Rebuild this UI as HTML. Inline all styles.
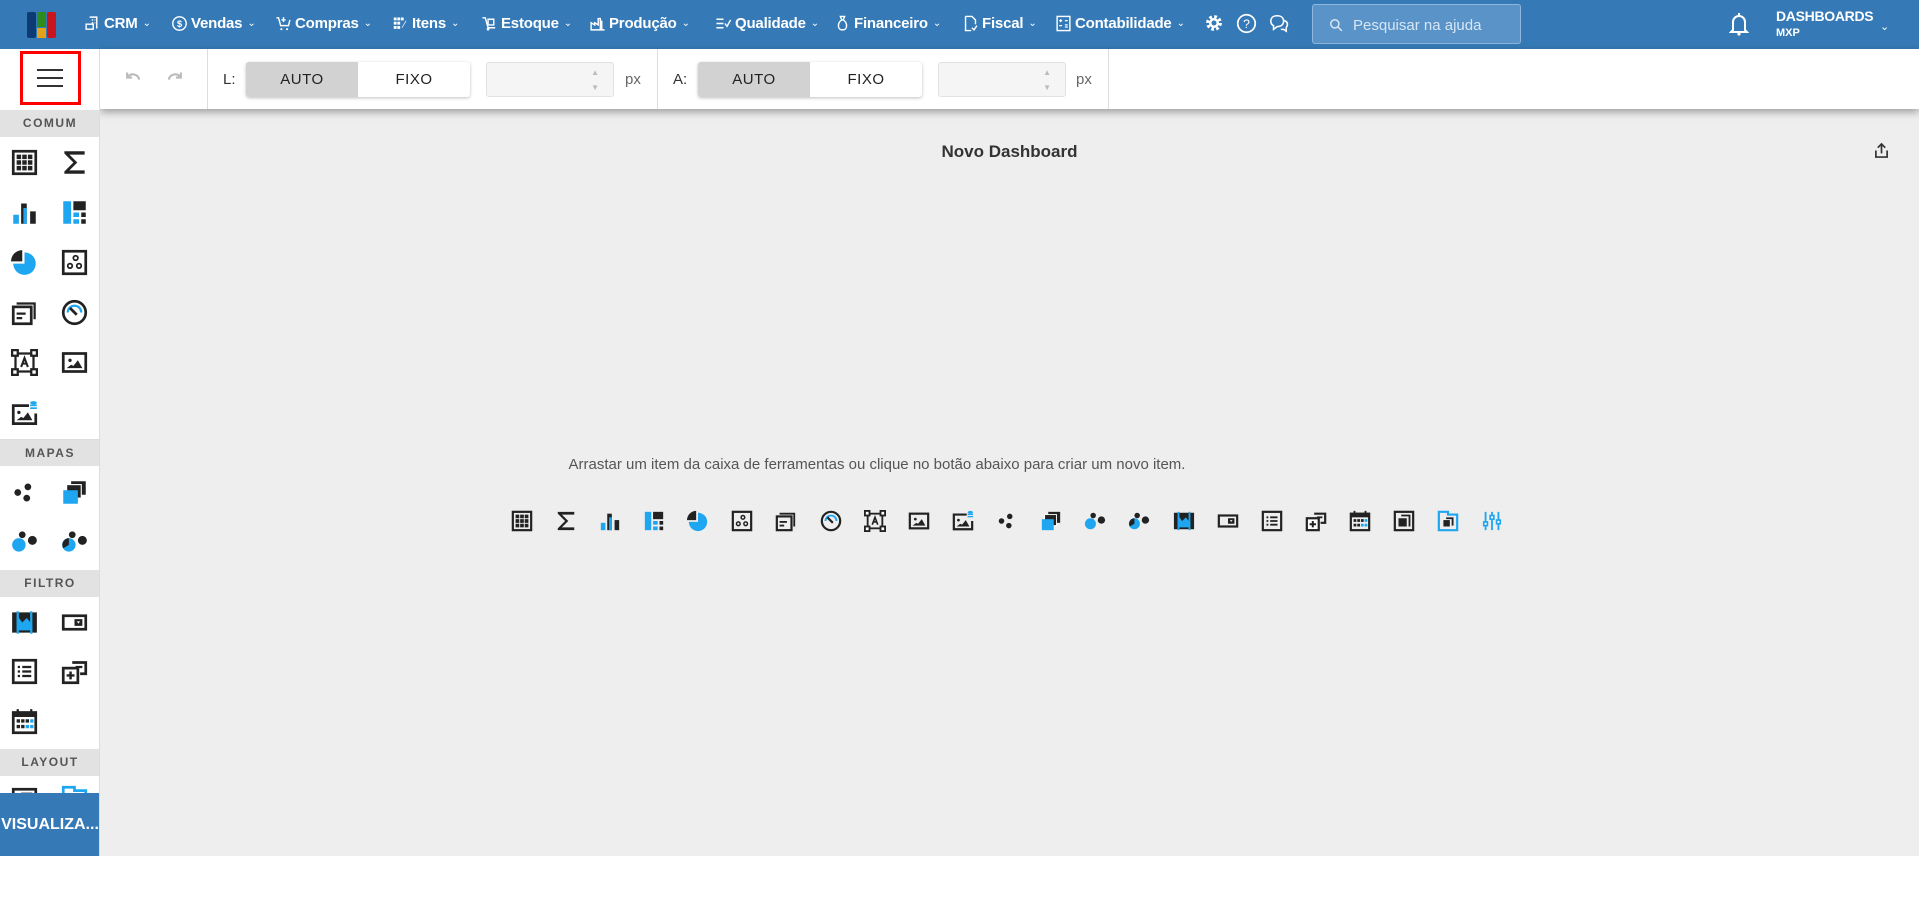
<!DOCTYPE html>
<html><head><meta charset="utf-8"><style>
*{box-sizing:border-box;margin:0;padding:0}
body{width:1919px;height:898px;overflow:hidden;background:#fff;font-family:"Liberation Sans",Arial,sans-serif;position:relative}
.top{position:absolute;left:0;top:0;width:1919px;height:49px;background:#357ab7;color:#fff}
.nav{position:absolute;top:15px;font-size:15px;font-weight:bold;white-space:nowrap;display:flex;align-items:center;gap:3px;letter-spacing:-.2px}
.nav svg{width:17px;height:17px}
.chev{font-size:10px;font-weight:normal;margin-left:2px}
.search{position:absolute;left:1312px;top:4px;width:209px;height:40px;background:#5a93c8;border:1px solid #8fb6dc;border-radius:3px;color:#d6e6f5;font-size:15px;padding:12px 0 0 40px}
.tb{position:absolute;left:100px;top:49px;width:1819px;height:60px;background:#fff;box-shadow:0 3px 8px rgba(0,0,0,.35);z-index:2}
.side{position:absolute;left:0;top:49px;width:100px;height:807px;background:#fff;border-right:1px solid #ddd;z-index:3;overflow:hidden}
.main{position:absolute;left:100px;top:109px;width:1819px;height:747px;background:#eee}
.hdr{position:absolute;left:0;width:100px;height:27px;background:#e2e2e2;color:#555;font-size:12px;font-weight:bold;letter-spacing:1.5px;text-align:center;line-height:27px}
.si{position:absolute;width:27px;height:27px}
.vd{position:absolute;background:#ddd;width:1px;top:0;height:60px}
.tog{position:absolute;top:13px;height:35px;width:224px;border-radius:3px;box-shadow:0 1px 3px rgba(0,0,0,.25);display:flex;font-size:15px;color:#222;letter-spacing:.5px}
.tog div{flex:1;text-align:center;line-height:35px}
.tog div:first-child{background:#d2d2d2;border-radius:3px 0 0 3px}
.inp{position:absolute;top:13px;width:128px;height:35px;background:#f5f5f5;border:1px solid #e2e2e2;border-radius:3px;color:#bbb;font-size:8px;text-align:right;padding-right:14px;line-height:15px;padding-top:2px}
.lab{position:absolute;top:22px;font-size:15px;color:#333}
.bi{position:absolute;top:510px;width:22px;height:22px}
</style></head><body>
<svg width="0" height="0" style="position:absolute">
<defs>
<symbol id="grid" viewBox="0 0 24 24"><rect x="2" y="2" width="20" height="20" fill="none" stroke="#222" stroke-width="2.4"/><path d="M5 5h4v4H5zM10 5h4v4h-4zM15 5h4v4h-4zM5 10h4v4H5zM10 10h4v4h-4zM15 10h4v4h-4zM5 15h4v4H5zM10 15h4v4h-4zM15 15h4v4h-4z" fill="#222"/></symbol>
<symbol id="sig" viewBox="0 0 24 24"><path d="M3 2h18v3H7.5l7 7-7 7H21v3H3v-2l8-8-8-8z" fill="#222"/></symbol>
<symbol id="bar" viewBox="0 0 24 24"><rect x="2" y="14" width="5" height="8" fill="#1ea7f0"/><rect x="9" y="4" width="5" height="18" fill="#222"/><rect x="11" y="8" width="3" height="14" fill="#1ea7f0"/><rect x="17" y="11" width="5" height="11" fill="#222"/></symbol>
<symbol id="tree" viewBox="0 0 24 24"><rect x="2" y="2" width="7" height="20" fill="#1ea7f0"/><rect x="11" y="2" width="11" height="8" fill="#222"/><rect x="11" y="12" width="5" height="4" fill="#1ea7f0"/><rect x="11" y="18" width="5" height="4" fill="#1ea7f0"/><rect x="18" y="12" width="4" height="4" fill="#222"/><rect x="18" y="18" width="4" height="4" fill="#222"/></symbol>
<symbol id="pie" viewBox="0 0 24 24"><path d="M12 3a10 10 0 1 1-10 10h10z" fill="#1ea7f0"/><path d="M10 1v10H0A10 10 0 0 1 10 1z" fill="#222"/></symbol>
<symbol id="scat" viewBox="0 0 24 24"><rect x="2" y="2" width="20" height="20" fill="none" stroke="#222" stroke-width="2.4"/><circle cx="13" cy="8" r="2" fill="none" stroke="#222" stroke-width="1.6"/><circle cx="8" cy="15" r="2" fill="none" stroke="#222" stroke-width="1.6"/><circle cx="16" cy="15" r="2" fill="none" stroke="#222" stroke-width="1.6"/></symbol>
<symbol id="card" viewBox="0 0 24 24"><path d="M5 3h17v15h-2V5H5z" fill="#222"/><rect x="2" y="7" width="16" height="15" fill="none" stroke="#222" stroke-width="2.4"/><rect x="5" y="12" width="8" height="2" fill="#222"/><rect x="5" y="16" width="5" height="2" fill="#222"/></symbol>
<symbol id="gauge" viewBox="0 0 24 24"><circle cx="12" cy="12" r="10" fill="none" stroke="#222" stroke-width="2.4"/><path d="M6 12a6 6 0 0 1 12 0" fill="none" stroke="#1ea7f0" stroke-width="2"/><path d="M8 8l6 6" stroke="#222" stroke-width="2.4"/></symbol>
<symbol id="text" viewBox="0 0 24 24"><rect x="4" y="4" width="16" height="16" fill="none" stroke="#222" stroke-width="2"/><rect x="1" y="1" width="5" height="5" fill="#fff" stroke="#222" stroke-width="2"/><rect x="18" y="1" width="5" height="5" fill="#fff" stroke="#222" stroke-width="2"/><rect x="1" y="18" width="5" height="5" fill="#fff" stroke="#222" stroke-width="2"/><rect x="18" y="18" width="5" height="5" fill="#fff" stroke="#222" stroke-width="2"/><path d="M9 16l3-8 3 8M10 13h4" fill="none" stroke="#222" stroke-width="1.8"/></symbol>
<symbol id="img" viewBox="0 0 24 24"><rect x="2" y="4" width="20" height="16" fill="none" stroke="#222" stroke-width="2.4"/><circle cx="8" cy="10" r="1.5" fill="#222"/><path d="M5 17l4-3 2 1 4-5 4 7z" fill="#222"/></symbol>
<symbol id="imgdb" viewBox="0 0 24 24"><path d="M16 5H2v16h20V12" fill="none" stroke="#222" stroke-width="2.4"/><circle cx="7" cy="11" r="1.5" fill="#222"/><path d="M5 18l4-3 2 1 4-5 4 7z" fill="#222"/><ellipse cx="20" cy="2.5" rx="3" ry="1.5" fill="#1ea7f0"/><rect x="17" y="4" width="6" height="1.5" fill="#1ea7f0"/><rect x="17" y="6.5" width="6" height="1.5" fill="#1ea7f0"/></symbol>
<symbol id="dots" viewBox="0 0 24 24"><circle cx="6" cy="12" r="3" fill="#222"/><circle cx="15" cy="7" r="3" fill="#222"/><circle cx="14" cy="17" r="3" fill="#222"/></symbol>
<symbol id="sq" viewBox="0 0 24 24"><rect x="9" y="2" width="13" height="12" fill="#222"/><rect x="5" y="5" width="13" height="12" fill="#222" stroke="#fff" stroke-width="1"/><rect x="2" y="10" width="13" height="12" fill="#1ea7f0"/></symbol>
<symbol id="bdots" viewBox="0 0 24 24"><circle cx="10" cy="6" r="3" fill="#222"/><circle cx="19" cy="11" r="4" fill="#222"/><circle cx="7" cy="15" r="6" fill="#1ea7f0"/></symbol>
<symbol id="pdots" viewBox="0 0 24 24"><circle cx="10" cy="6" r="3" fill="#222"/><circle cx="19" cy="11" r="4" fill="#222"/><circle cx="7" cy="15" r="6" fill="#1ea7f0"/><path d="M7 15V9a6 6 0 0 0-5 9z" fill="#222"/></symbol>
<symbol id="range" viewBox="0 0 24 24"><rect x="1" y="3" width="22" height="18" fill="#222"/><path d="M5 5l5 7 4-4 5 6v5H5z" fill="#1ea7f0"/><rect x="5" y="2" width="2" height="20" fill="#1ea7f0"/><rect x="17" y="2" width="2" height="20" fill="#1ea7f0"/></symbol>
<symbol id="combo" viewBox="0 0 24 24"><rect x="2" y="6" width="20" height="12" fill="none" stroke="#222" stroke-width="2.4"/><rect x="12" y="9" width="7" height="6" fill="#222"/><path d="M14 11h3l-1.5 2z" fill="#fff"/></symbol>
<symbol id="list" viewBox="0 0 24 24"><rect x="2" y="2" width="20" height="20" fill="none" stroke="#222" stroke-width="2.4"/><path d="M6 7h2v2H6zM10 7h8v2h-8zM6 11h2v2H6zM10 11h8v2h-8zM6 15h2v2H6zM10 15h8v2h-8z" fill="#222"/></symbol>
<symbol id="tr" viewBox="0 0 24 24"><path d="M10 4h12v10h-5" fill="none" stroke="#222" stroke-width="2.4"/><path d="M13 8h6" stroke="#222" stroke-width="2"/><rect x="2" y="9" width="13" height="13" fill="#fff" stroke="#222" stroke-width="2.4"/><path d="M8.5 12v7M5 15.5h7" stroke="#222" stroke-width="2.2"/></symbol>
<symbol id="date" viewBox="0 0 24 24"><rect x="2" y="4" width="20" height="18" fill="none" stroke="#222" stroke-width="2.4"/><rect x="2" y="4" width="20" height="4" fill="#222"/><path d="M6 1v5M18 1v5" stroke="#222" stroke-width="2"/><path d="M5 10h3v3H5zM9 10h3v3H9zM13 10h3v3h-3zM5 15h3v3H5zM9 15h3v3H9z" fill="#222"/><path d="M17 10h3v3h-3zM13 15h3v3h-3zM17 15h3v3h-3z" fill="#1ea7f0"/></symbol>
<symbol id="grp" viewBox="0 0 24 24"><rect x="2" y="2" width="20" height="20" fill="none" stroke="#222" stroke-width="2.4"/><path d="M9 6h9v12" fill="none" stroke="#222" stroke-width="2"/><rect x="6" y="9" width="9" height="9" fill="#222"/></symbol>
<symbol id="tab" viewBox="0 0 24 24"><path d="M2 2h10v3h10v17H2z" fill="none" stroke="#1ea7f0" stroke-width="2.4"/><path d="M10 9h7v8" fill="none" stroke="#222" stroke-width="2"/><rect x="7" y="11" width="7" height="7" fill="#222"/></symbol>
<symbol id="sl" viewBox="0 0 24 24"><path d="M5 2v20M12 2v20M19 2v20" stroke="#1ea7f0" stroke-width="2"/><rect x="3" y="13" width="4" height="4" fill="#fff" stroke="#1ea7f0" stroke-width="1.8"/><rect x="10" y="6" width="4" height="4" fill="#fff" stroke="#1ea7f0" stroke-width="1.8"/><rect x="17" y="11" width="4" height="4" fill="#fff" stroke="#1ea7f0" stroke-width="1.8"/></symbol>
</defs></svg>

<div class="top">
 <svg style="position:absolute;left:27px;top:12px" width="30" height="26" viewBox="0 0 30 26"><rect x="0" y="0" width="9" height="26" rx="2" fill="#0d3b73"/><rect x="10" y="0" width="9" height="15" fill="#2e8b1e"/><rect x="10" y="16" width="9" height="10" fill="#e3a21a"/><rect x="20" y="0" width="9" height="26" rx="2" fill="#c9151b"/></svg>
 <div class="nav" style="left:84px"><svg viewBox="0 0 24 24"><path d="M8 3h10v16M11 7h2M15 7h1M11 11h2M15 11h1M3 13h10v7H3z" fill="none" stroke="#fff" stroke-width="2"/></svg>CRM<span class="chev">&#8964;</span></div>
 <div class="nav" style="left:171px"><svg viewBox="0 0 24 24"><circle cx="12" cy="12" r="9.5" fill="none" stroke="#fff" stroke-width="2"/><text x="12" y="17" font-size="13" text-anchor="middle" fill="#fff" font-family="Liberation Sans">$</text></svg>Vendas<span class="chev">&#8964;</span></div>
 <div class="nav" style="left:275px"><svg viewBox="0 0 24 24"><path d="M2 4h3l3 11h11l2-8M12 3v7M9 7h6" fill="none" stroke="#fff" stroke-width="2"/><circle cx="9" cy="20" r="1.5" fill="#fff"/><circle cx="17" cy="20" r="1.5" fill="#fff"/></svg>Compras<span class="chev">&#8964;</span></div>
 <div class="nav" style="left:392px"><svg viewBox="0 0 24 24"><path d="M3 4h3v3H3zM8 4h3v3H8zM13 4h3v3h-3zM3 10h3v3H3zM8 10h3v3H8zM3 16h3v3H3zM8 16h3v3H8zM14 18l6-10" fill="#fff" stroke="#fff"/></svg>Itens<span class="chev">&#8964;</span></div>
 <div class="nav" style="left:481px"><svg viewBox="0 0 24 24"><path d="M2 4h4l4 14h10M10 6h8v8h-8z" fill="none" stroke="#fff" stroke-width="2"/><circle cx="10" cy="20" r="2" fill="#fff"/></svg>Estoque<span class="chev">&#8964;</span></div>
 <div class="nav" style="left:589px"><svg viewBox="0 0 24 24"><path d="M3 21V11l5 3v-3l5 3V5h3v16zM2 21h20M18 8v13" fill="none" stroke="#fff" stroke-width="2"/></svg>Produção<span class="chev">&#8964;</span></div>
 <div class="nav" style="left:715px"><svg viewBox="0 0 24 24"><path d="M2 6h10M2 12h10M2 18h10M14 12l3 4 5-9" fill="none" stroke="#fff" stroke-width="2"/></svg>Qualidade<span class="chev">&#8964;</span></div>
 <div class="nav" style="left:834px"><svg viewBox="0 0 24 24"><path d="M9 2h6l-2 5h-2zM11 7c-6 3-7 14 1 14s7-11 1-14" fill="none" stroke="#fff" stroke-width="2"/></svg>Financeiro<span class="chev">&#8964;</span></div>
 <div class="nav" style="left:962px"><svg viewBox="0 0 24 24"><path d="M5 2h9l5 5v6M5 2v20h8" fill="none" stroke="#fff" stroke-width="2"/><path d="M14 18l3 3 4-6" fill="none" stroke="#fff" stroke-width="2"/></svg>Fiscal<span class="chev">&#8964;</span></div>
 <div class="nav" style="left:1055px"><svg viewBox="0 0 24 24"><rect x="3" y="2" width="18" height="20" fill="none" stroke="#fff" stroke-width="2"/><path d="M6 8h4M8 6v4M14 8h4M6 15h4M14 14h4M14 17h4" stroke="#fff" stroke-width="1.8"/></svg>Contabilidade<span class="chev">&#8964;</span></div>
 <svg style="position:absolute;left:1204px;top:13px" width="20" height="20" viewBox="0 0 24 24"><circle cx="12" cy="12" r="7" fill="none" stroke="#fff" stroke-width="5" stroke-dasharray="3 2.5"/><circle cx="12" cy="12" r="6" fill="#fff"/><circle cx="12" cy="12" r="3" fill="#357ab7"/></svg>
 <svg style="position:absolute;left:1236px;top:13px" width="21" height="21" viewBox="0 0 24 24"><circle cx="12" cy="12" r="10" fill="none" stroke="#fff" stroke-width="2"/><text x="12" y="17" font-size="14" text-anchor="middle" fill="#fff" font-family="Liberation Sans">?</text></svg>
 <svg style="position:absolute;left:1268px;top:13px" width="22" height="20" viewBox="0 0 24 22"><path d="M3 9c0-4 3-6 7-6s7 2 7 6-3 6-7 6l-4 3v-4c-2-1-3-3-3-5zM17 8c3 1 5 3 4 6l-1 2v4l-3-2h-3" fill="none" stroke="#fff" stroke-width="1.7"/></svg>
 <div class="search"><svg style="position:absolute;left:16px;top:13px" width="14" height="14" viewBox="0 0 24 24"><circle cx="10" cy="10" r="7" fill="none" stroke="#dbe8f4" stroke-width="2.5"/><path d="M15 15l7 7" stroke="#dbe8f4" stroke-width="2.5"/></svg>Pesquisar na ajuda</div>
 <svg style="position:absolute;left:1729px;top:12px" width="20" height="24" viewBox="0 0 20 24"><path d="M4 18V10a6 6 0 0 1 12 0v8l2 2H2z" fill="none" stroke="#fff" stroke-width="2"/><circle cx="10" cy="22" r="1.6" fill="#fff"/><rect x="9" y="1" width="2" height="3" fill="#fff"/></svg>
 <div style="position:absolute;left:1776px;top:8px;font-size:14px;font-weight:bold;letter-spacing:-.3px">DASHBOARDS</div>
 <div style="position:absolute;left:1776px;top:27px;font-size:11px;font-weight:bold">MXP</div>
 <div style="position:absolute;left:1880px;top:20px;font-size:11px">&#8964;</div>
</div>

<div class="tb">
 <svg style="position:absolute;left:25px;top:21px" width="17" height="15" viewBox="0 0 24 20"><path d="M3 3v7h7M4 9a9 9 0 0 1 16 4" fill="none" stroke="#bbb" stroke-width="3"/></svg>
 <svg style="position:absolute;left:66px;top:21px" width="17" height="15" viewBox="0 0 24 20"><path d="M21 3v7h-7M20 9A9 9 0 0 0 4 13" fill="none" stroke="#bbb" stroke-width="3"/></svg>
 <div class="vd" style="left:107px"></div>
 <div class="lab" style="left:123px">L:</div>
 <div class="tog" style="left:146px"><div>AUTO</div><div>FIXO</div></div>
 <div class="inp" style="left:386px">▲<br>▼</div>
 <div class="lab" style="left:525px;color:#666">px</div>
 <div class="vd" style="left:557px"></div>
 <div class="lab" style="left:573px">A:</div>
 <div class="tog" style="left:598px"><div>AUTO</div><div>FIXO</div></div>
 <div class="inp" style="left:838px">▲<br>▼</div>
 <div class="lab" style="left:976px;color:#666">px</div>
 <div class="vd" style="left:1008px"></div>
</div>

<div class="side">
 <div style="position:absolute;left:20px;top:2px;width:61px;height:54px;border:3px solid #f00;background:#fff"></div>
 <div style="position:absolute;left:37px;top:20px;width:26px;height:2px;background:#333;box-shadow:0 8px 0 #333,0 16px 0 #333"></div>
 <div class="hdr" style="top:61px">COMUM</div>
 <svg class="si" style="left:11px;top:100px"><use href="#grid"/></svg><svg class="si" style="left:61px;top:100px"><use href="#sig"/></svg>
 <svg class="si" style="left:11px;top:150px"><use href="#bar"/></svg><svg class="si" style="left:61px;top:150px"><use href="#tree"/></svg>
 <svg class="si" style="left:11px;top:200px"><use href="#pie"/></svg><svg class="si" style="left:61px;top:200px"><use href="#scat"/></svg>
 <svg class="si" style="left:11px;top:250px"><use href="#card"/></svg><svg class="si" style="left:61px;top:250px"><use href="#gauge"/></svg>
 <svg class="si" style="left:11px;top:300px"><use href="#text"/></svg><svg class="si" style="left:61px;top:300px"><use href="#img"/></svg>
 <svg class="si" style="left:11px;top:351px"><use href="#imgdb"/></svg>
 <div class="hdr" style="top:390px;border-top:1px solid #ddd">MAPAS</div>
 <svg class="si" style="left:11px;top:430px"><use href="#dots"/></svg><svg class="si" style="left:61px;top:430px"><use href="#sq"/></svg>
 <svg class="si" style="left:11px;top:479px"><use href="#bdots"/></svg><svg class="si" style="left:61px;top:479px"><use href="#pdots"/></svg>
 <div class="hdr" style="top:521px">FILTRO</div>
 <svg class="si" style="left:11px;top:560px"><use href="#range"/></svg><svg class="si" style="left:61px;top:560px"><use href="#combo"/></svg>
 <svg class="si" style="left:11px;top:609px"><use href="#list"/></svg><svg class="si" style="left:61px;top:609px"><use href="#tr"/></svg>
 <svg class="si" style="left:11px;top:659px"><use href="#date"/></svg>
 <div class="hdr" style="top:700px">LAYOUT</div>
 <svg class="si" style="left:11px;top:738px"><use href="#grp"/></svg><svg class="si" style="left:61px;top:736px"><use href="#tab"/></svg>
 <div style="position:absolute;left:0;top:744px;width:100px;height:63px;background:#357ab7;color:#fff;font-weight:bold;font-size:16px;line-height:63px;text-align:center">VISUALIZA...</div>
</div>

<div class="main">
 <div style="position:absolute;left:0;width:1819px;top:33px;text-align:center;font-size:17px;font-weight:bold;color:#333">Novo Dashboard</div>
 <svg style="position:absolute;left:1774px;top:33px" width="15" height="17" viewBox="0 0 16 18"><path d="M8 12V2M4 6l4-4 4 4M2 9v7h12V9" fill="none" stroke="#333" stroke-width="1.8"/></svg>
 <div style="position:absolute;left:0;width:1554px;top:347px;text-align:center;font-size:15px;color:#555">Arrastar um item da caixa de ferramentas ou clique no botão abaixo para criar um novo item.</div>
</div>
<svg class="bi" style="left:511px"><use href="#grid"/></svg>
<svg class="bi" style="left:555px"><use href="#sig"/></svg>
<svg class="bi" style="left:599px"><use href="#bar"/></svg>
<svg class="bi" style="left:643px"><use href="#tree"/></svg>
<svg class="bi" style="left:687px"><use href="#pie"/></svg>
<svg class="bi" style="left:731px"><use href="#scat"/></svg>
<svg class="bi" style="left:775px"><use href="#card"/></svg>
<svg class="bi" style="left:820px"><use href="#gauge"/></svg>
<svg class="bi" style="left:864px"><use href="#text"/></svg>
<svg class="bi" style="left:908px"><use href="#img"/></svg>
<svg class="bi" style="left:952px"><use href="#imgdb"/></svg>
<svg class="bi" style="left:996px"><use href="#dots"/></svg>
<svg class="bi" style="left:1040px"><use href="#sq"/></svg>
<svg class="bi" style="left:1084px"><use href="#bdots"/></svg>
<svg class="bi" style="left:1128px"><use href="#pdots"/></svg>
<svg class="bi" style="left:1173px"><use href="#range"/></svg>
<svg class="bi" style="left:1217px"><use href="#combo"/></svg>
<svg class="bi" style="left:1261px"><use href="#list"/></svg>
<svg class="bi" style="left:1305px"><use href="#tr"/></svg>
<svg class="bi" style="left:1349px"><use href="#date"/></svg>
<svg class="bi" style="left:1393px"><use href="#grp"/></svg>
<svg class="bi" style="left:1437px"><use href="#tab"/></svg>
<svg class="bi" style="left:1481px"><use href="#sl"/></svg>
</body></html>
